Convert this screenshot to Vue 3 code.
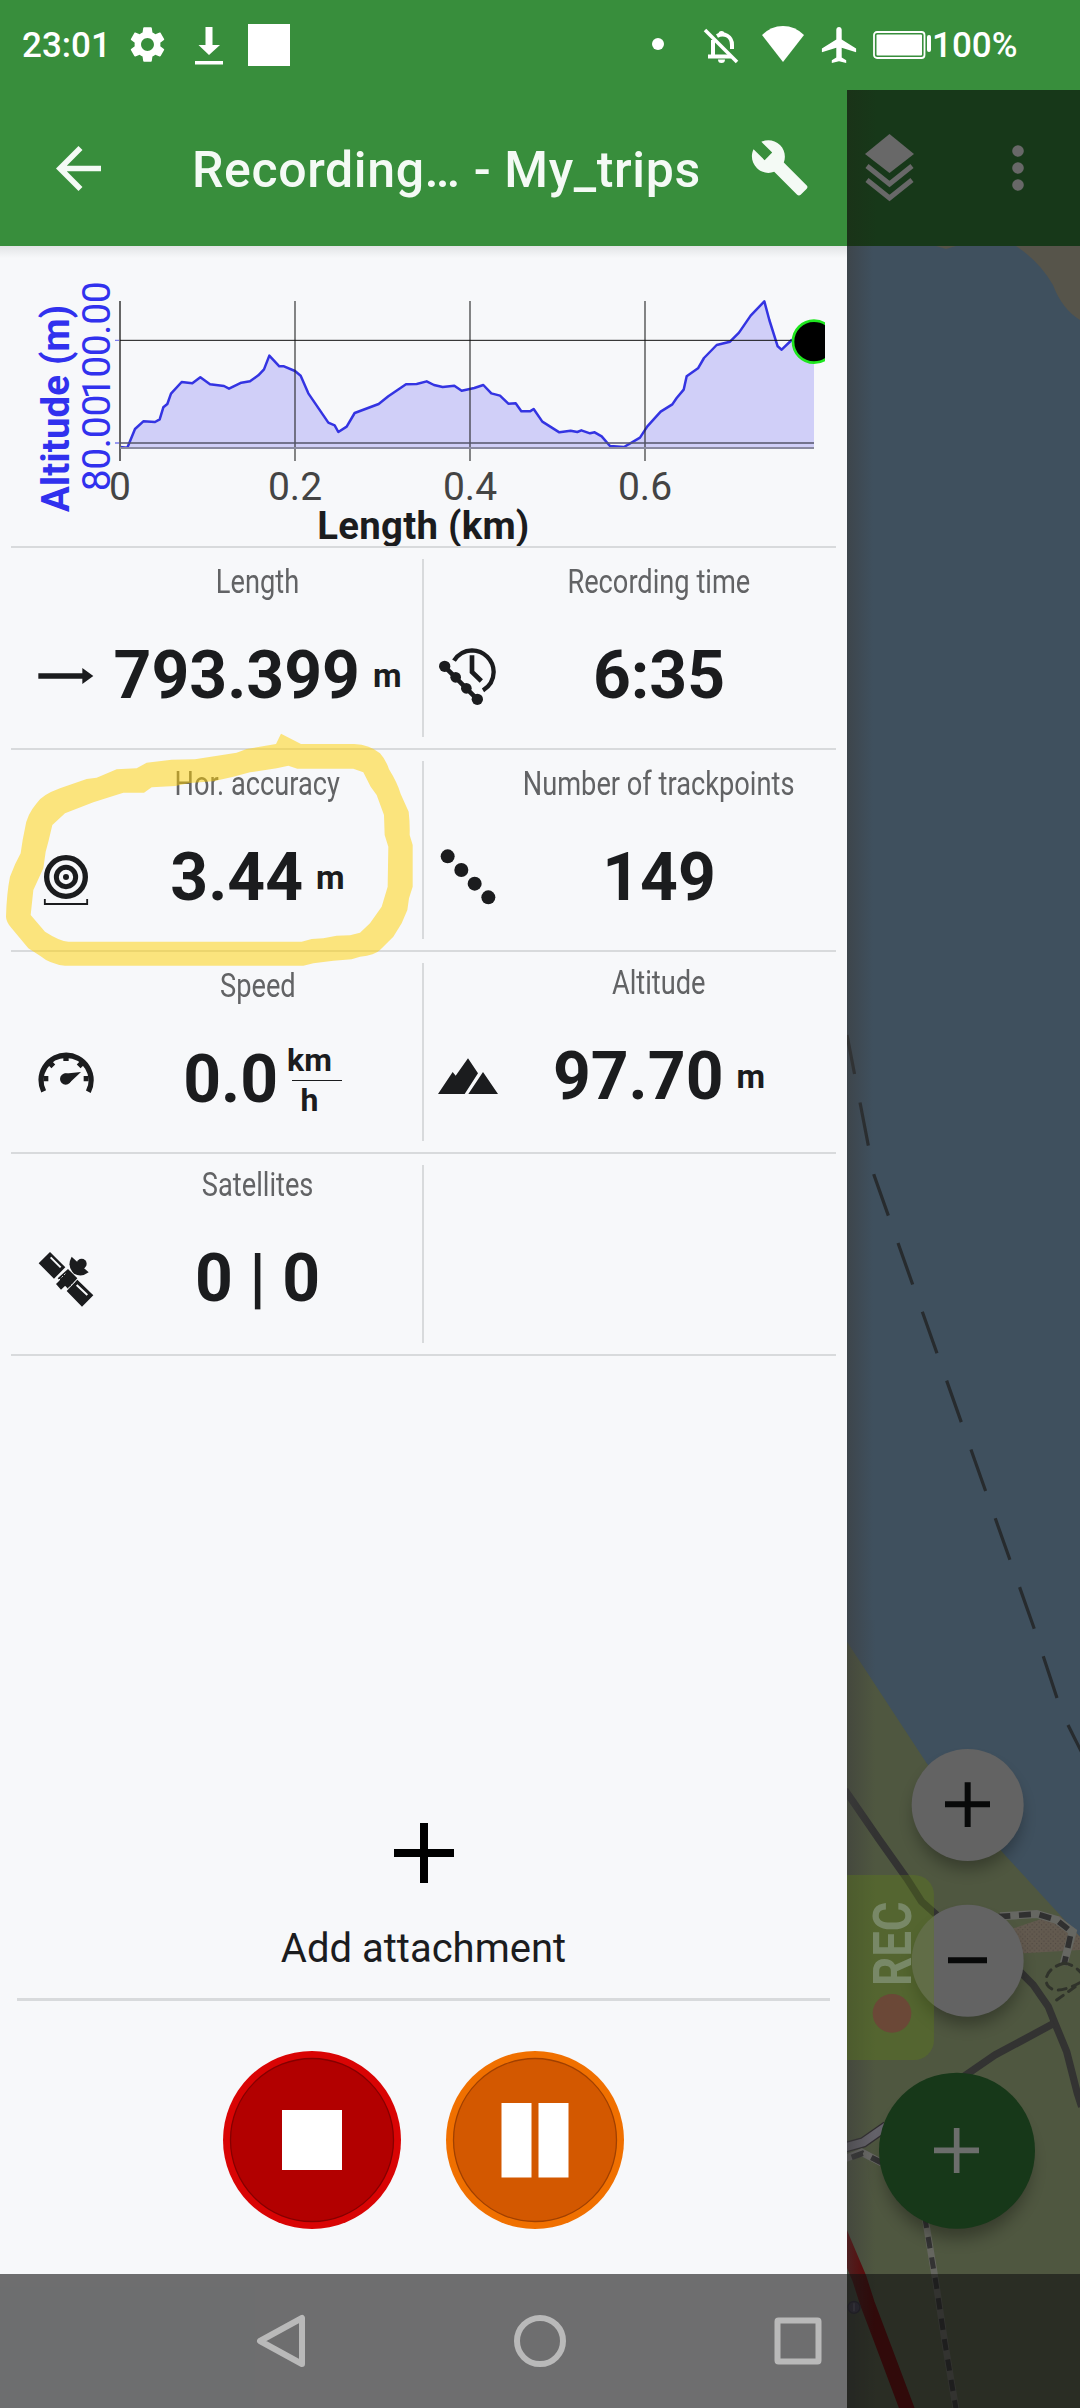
<script setup>
const altitudeLine =
  '360,591 382,593 405,537 430,514 465,516 479,508 490,472 502,462 513,431 545,396 577,400 601,382 630,403 672,408 687,416 724,398 750,394 775,376 792,358 808,317 838,349 852,349 885,363 902,377 925,430 985,518 1004,526 1015,546 1040,530 1064,489 1136,462 1165,439 1218,403 1250,402 1280,394 1302,405 1328,411 1363,407 1385,422 1423,414 1450,405 1474,430 1500,437 1525,461 1547,460 1564,484 1590,484 1601,477 1627,515 1678,547 1712,542 1732,546 1744,541 1770,550 1784,547 1805,559 1830,588 1872,591 1920,563 1942,529 1982,485 2017,463 2030,444 2051,419 2060,379 2094,355 2112,324 2150,285 2190,275 2217,248 2252,197 2293,154 2308,210 2333,289 2345,299 2375,270 2442,270'
const altitudeArea = `${altitudeLine} 2442,594 360,594`
const gridX = [
  { x: 360, label: '0' },
  { x: 885, label: '0.2' },
  { x: 1410, label: '0.4' },
  { x: 1935, label: '0.6' },
]
const rows = [
  [
    { id: 'length', label: 'Length', value: '793.399', unit: 'm' },
    { id: 'time', label: 'Recording time', value: '6:35' },
  ],
  [
    { id: 'accuracy', label: 'Hor. accuracy', value: '3.44', unit: 'm' },
    { id: 'points', label: 'Number of trackpoints', value: '149' },
  ],
  [
    { id: 'speed', label: 'Speed', value: '0.0', fraction: ['km', 'h'] },
    { id: 'altitude', label: 'Altitude', value: '97.70', unit: 'm', raised: true },
  ],
  [
    { id: 'satellites', label: 'Satellites', value: '0 | 0', raised: true },
    { id: 'empty' },
  ],
]
</script>

<template>
  <div class="screen">
    <header class="status">
      <span class="clock">23:01</span>
      <svg class="s-gear" viewBox="0 0 24 24" width="43" height="43" fill="#fff"><path d="M19.14 12.94c.04-.3.06-.61.06-.94 0-.32-.02-.64-.07-.94l2.03-1.58c.18-.14.23-.41.12-.61l-1.92-3.32c-.12-.22-.37-.29-.59-.22l-2.39.96c-.5-.38-1.03-.7-1.62-.94l-.36-2.54c-.04-.24-.24-.41-.48-.41h-3.84c-.24 0-.43.17-.47.41l-.36 2.54c-.59.24-1.13.57-1.62.94l-2.39-.96c-.22-.08-.47 0-.59.22L2.74 8.87c-.12.21-.08.47.12.61l2.03 1.58c-.05.3-.09.63-.09.94s.02.64.07.94l-2.03 1.58c-.18.14-.23.41-.12.61l1.92 3.32c.12.22.37.29.59.22l2.39-.96c.5.38 1.03.7 1.62.94l.36 2.54c.05.24.24.41.48.41h3.84c.24 0 .44-.17.47-.41l.36-2.54c.59-.24 1.13-.56 1.62-.94l2.39.96c.22.08.47 0 .59-.22l1.92-3.32c.12-.22.07-.47-.12-.61l-2.01-1.58zM12 15.6c-1.98 0-3.6-1.62-3.6-3.6s1.62-3.6 3.6-3.6 3.6 1.62 3.6 3.6-1.62 3.6-3.6 3.6z" /></svg>
      <svg class="s-down" viewBox="0 0 28 38" width="28" height="38" fill="#fff"><path d="M10.5 0h7v18H25L14 28 3.500 18h7zM0 34h28v3.500H0z" /></svg>
      <span class="s-square"></span>
      <span class="s-dot"></span>
      <svg class="s-bell" viewBox="0 0 36 36" width="36" height="36" fill="none" stroke="#fff"><path d="M10 12V28M5 28.500H28M14 8C21 4 29 8 29 17V21" stroke-width="4" /><path d="M2 2L34 34" stroke-width="3.500" /><path d="M15.500 6a3 3 0 0 1 6 0zM15 31.500h7a3.500 3.500 0 0 1-7 0z" fill="#fff" stroke="none" /></svg>
      <svg class="s-wifi" viewBox="0 0 42 36" width="42" height="36" fill="#fff"><path d="M0 9Q9 0 21 0T42 9L21 36z" /></svg>
      <svg class="s-plane" viewBox="2 2 20 20" width="36" height="36" fill="#fff"><path d="M21.500 16v-2l-8-5V3.500C13.500 2.670 12.830 2 12 2s-1.500.67-1.500 1.500V9l-8 5v2l8-2.500V19l-2.500 1.500V22l4-1 4 1v-1.500L13.500 19v-5.500z" /></svg>
      <svg class="s-battery" viewBox="0 0 58 28" width="58" height="28" fill="#fff"><rect x="1" y="1" width="50.500" height="26" rx="3" fill="none" stroke="#fff" stroke-width="1.800" /><rect x="3.500" y="3.500" width="45.500" height="21" rx="1" /><rect x="54" y="4" width="4" height="17" rx="2" /></svg>
      <span class="percent">100%</span>
    </header>

    <div class="body">
      <main class="drawer">
        <div class="appbar">
          <svg class="back" viewBox="4 4 16 16" width="45" height="45" fill="#f4faf5"><path d="M20 11H7.830l5.590-5.590L12 4l-8 8 8 8 1.410-1.410L7.830 13H20z" /></svg>
          <h1>Recording… - My_trips</h1>
          <svg class="wrench" viewBox="0.600 0.800 22.600 22.200" width="57" height="57" fill="#f4faf5"><path d="M22.700 19l-9.100-9.100c.9-2.300.4-5-1.500-6.900-2-2-5-2.400-7.400-1.300L9 6 6 9 1.600 4.700C.4 7.100.9 10.100 2.900 12.100c1.900 1.900 4.600 2.400 6.900 1.500l9.100 9.100c.4.4 1 .4 1.400 0l2.300-2.300c.5-.4.5-1.100.1-1.400z" /></svg>
        </div>

        <svg class="chart" viewBox="0 -12 2541 900" width="847" height="300">
          <defs>
            <linearGradient id="fade" x1="0" y1="0" x2="0" y2="1"><stop offset="0" stop-color="#e2e4e6" /><stop offset="1" stop-color="#f7f8fa" /></linearGradient>
            <clipPath id="plot"><rect x="300" y="100" width="2175" height="560" /></clipPath>
          </defs>
          <rect x="0" y="-12" width="2541" height="36" fill="url(#fade)" />
          <polygon :points="altitudeArea" fill="#d0cff8" />
          <path d="M345 271H360M345 579H360" stroke="#7b7bf0" stroke-width="4" />
          <polyline :points="altitudeLine" fill="none" stroke="#3434e2" stroke-width="7.500" stroke-linejoin="round" />
          <path d="M360 153V633" stroke="#666" stroke-width="6" />
          <path d="M885 153V633M1410 153V633M1935 153V633" stroke="#222" stroke-opacity=".65" stroke-width="5" />
          <path d="M360 579H2442" stroke="#55556a" stroke-width="4.500" />
          <path d="M360 594H2442" stroke="#8a8aa0" stroke-width="5.500" />
          <path d="M360 271H2442" stroke="#111" stroke-width="3" />
          <circle cx="2442" cy="275" r="63" fill="#000" stroke="#1fe61f" stroke-width="8" clip-path="url(#plot)" />
          <text v-for="g in gridX" :key="g.x" :x="g.x" y="749" class="tick">{{ g.label }}</text>
          <text x="1270" y="866" class="axis" textLength="636">Length (km)</text>
          <text transform="translate(207 475) rotate(-90)" class="axis blue" textLength="622">Altitude (m)</text>
          <text transform="translate(330 271) rotate(-90)" class="tick blue" textLength="354">100.00</text>
          <text transform="translate(330 579) rotate(-90)" class="tick blue" textLength="290">80.00</text>
        </svg>

        <section class="stats">
          <div v-for="(row, i) in rows" :key="i" class="row">
            <div v-for="(c, j) in row" :key="c.id" class="cell" :class="j ? 'right' : 'left'">
              <div class="icon">
                <svg v-if="c.id === 'length'" viewBox="108 318 180 180"><path d="M115 400H247V384L280 408L247 432V416H115z" /></svg>
                <svg v-else-if="c.id === 'time'" viewBox="54 318 180 180"><g fill="none" stroke="#1b1c1e"><path d="M102 362A66 66 0 0 1 156 331A66 66 0 0 1 221 396A66 66 0 0 1 189 451" stroke-width="13" /><path d="M156 346V396L184 423" stroke-width="14" /><path d="M74 380L172 478" stroke-width="14" /></g><circle cx="74" cy="379" r="17" /><circle cx="107" cy="412" r="16" /><circle cx="139" cy="445" r="16" /><circle cx="172" cy="478" r="17" /></svg>
                <svg v-else-if="c.id === 'accuracy'" viewBox="108 924 180 180"><g fill="none" stroke="#1b1c1e"><circle cx="198" cy="1011" r="58" stroke-width="16" /><circle cx="198" cy="1011" r="29" stroke-width="15" /><path d="M134.500 1077V1092H261.500V1077" stroke-width="5.500" /></g><circle cx="198" cy="1011" r="9" /></svg>
                <svg v-else-if="c.id === 'points'" viewBox="54 924 180 180"><circle cx="83" cy="949" r="21" /><circle cx="124" cy="990" r="21" /><circle cx="164" cy="1031" r="21" /><circle cx="205" cy="1072" r="21" /></svg>
                <svg v-else-if="c.id === 'speed'" viewBox="108 300 180 180"><g fill="none" stroke="#1b1c1e" stroke-width="16"><path d="M131 424A75 75 0 1 1 265 425" /><path d="M130 386H145M266 386H251M198 317V333M150 339L160 349M246 339L236 349" /></g><circle cx="197" cy="387" r="17" /><path d="M192 371L243 366L208 399z" /></svg>
                <svg v-else-if="c.id === 'altitude'" viewBox="54 300 180 180"><path d="M54 432L98 366L107 377L144 325L174 370L134 432zM145 432L189 366L234 432z" /></svg>
                <svg v-else-if="c.id === 'satellites'" viewBox="108 906 180 180"><path d="M150 906L196 952L162 986L116 940zM232 989L280 1036L246 1070L200 1023zM204 957L232 985L204 1016L173 985zM168 1002L186 984L202 1001L183 1019z" /><path d="M215 920L266 967Q245 983 222 971Q199 949 215 920z" /><circle cx="245" cy="941" r="15" /><path d="M152 922L182 952M230 1005L262 1035" stroke="#f7f8fa" stroke-width="6" /><path d="M177 990L196 971M205 1014L224 996" stroke="#f7f8fa" stroke-width="3" stroke-dasharray="5 6" /></svg>
              </div>
              <div v-if="c.label" class="info" :class="{ raised: c.raised }">
                <div class="label">{{ c.label }}</div>
                <div class="value">
                  <span>{{ c.value }}</span>
                  <span v-if="c.unit" class="unit">{{ c.unit }}</span>
                  <span v-if="c.fraction" class="fraction"><span>{{ c.fraction[0] }}</span><i></i><span>{{ c.fraction[1] }}</span></span>
                </div>
              </div>
            </div>
          </div>
        </section>

        <section class="attach">
          <svg width="60" height="60" viewBox="0 0 60 60"><path d="M30 0V60M0 30H60" stroke="#000" stroke-width="8" /></svg>
          <span>Add attachment</span>
        </section>
        <div class="rule"></div>
        <section class="controls">
          <svg width="178" height="178" viewBox="0 0 178 178"><circle cx="89" cy="89" r="89" fill="#d90404" /><circle cx="89" cy="89" r="81.500" fill="#b20000" stroke="#850000" stroke-width="1.300" /><path d="M59 59H119V119H59z" fill="#fff" /></svg>
          <svg width="178" height="178" viewBox="0 0 178 178"><circle cx="89" cy="89" r="89" fill="#f07000" /><circle cx="89" cy="89" r="81.500" fill="#d35800" stroke="#a04000" stroke-width="1.300" /><path d="M55.500 52H85.500V126.500H55.500zM92.500 52H122.500V126.500H92.500z" fill="#fff" /></svg>
        </section>

        <svg class="marker" viewBox="0 570 1290 720" width="430" height="240">
          <path fill="#ffd000" fill-opacity=".5" fill-rule="evenodd" d="M843 581L903 612H1062Q1110 614 1140 640Q1158 660 1167 688Q1192 728 1202 762L1226 815Q1230 850 1229 885L1238 915V1040L1227 1075L1222 1110L1205 1150L1180 1190L1140 1230Q1125 1246 1080 1250L1055 1258L1000 1262L940 1270L910 1277H195Q150 1272 120 1247L85 1225L60 1195L35 1165Q18 1145 18 1130Q20 1060 30 1010Q45 970 62 940L68 900L75 865Q80 825 110 790Q125 765 180 745L260 717L290 713L350 688L410 685L440 668L515 659L585 658L710 638L740 627L828 612zM865 677L892 686H1060L1090 697L1112 740L1130 765L1152 825L1154 885L1165 920L1163 1040L1145 1100L1110 1150L1080 1178L1050 1186L1010 1187L970 1195L935 1197L905 1205H205Q180 1204 135 1175L92 1125L100 1050L130 985L137 935L145 905L157 855L195 820L280 787L370 758H432L455 742L525 738L570 729L640 724L700 710L750 697L830 685z" />
        </svg>
      </main>

      <aside class="side">
        <div class="sidebar">
          <svg class="layers" width="49" height="68" viewBox="0 0 49 68" fill="#686868"><path d="M24.500 0L49 20L24.500 39L0 20z" /><path d="M2 32L24.500 50L47 32" fill="none" stroke="#686868" stroke-width="5" /><path d="M2 46L24.500 64L47 46" fill="none" stroke="#686868" stroke-width="5" /></svg>
          <svg width="12" height="46" viewBox="0 0 12 46" fill="#686868"><circle cx="6" cy="6" r="5.800" /><circle cx="6" cy="23" r="5.800" /><circle cx="6" cy="40" r="5.800" /></svg>
        </div>
        <svg class="map" viewBox="847 246 233 2162" width="233" height="2162">
          <defs>
            <linearGradient id="edge"><stop offset="0" stop-color="#3c3c3c" stop-opacity=".55" /><stop offset="1" stop-color="#3c3c3c" stop-opacity="0" /></linearGradient>
            <filter id="soft" x="-30%" y="-30%" width="160%" height="160%"><feGaussianBlur stdDeviation="24" /></filter>
            <pattern id="sand" width="14" height="14" patternUnits="userSpaceOnUse"><rect width="14" height="14" fill="#635a4f" /><path d="M3 3h3v3H3zM10 10h3v3h-3z" fill="#4d453f" /></pattern>
          </defs>
          <rect x="847" y="246" width="233" height="2162" fill="#3f505e" />
          <path d="M1016 246Q1040 262 1053 285Q1062 309 1080 320V246z" fill="#56544a" />
          <path d="M936 246H956L946 249z" fill="#56544a" />
          <g fill="none" stroke="#272b2e" stroke-width="3.200">
            <path d="M1057 1698L1034 1628L874 1175L847 1035" stroke-dasharray="44 29" />
            <path d="M1068 1725L1084 1757" />
          </g>
          <g transform="translate(830 1620) scale(.33333)">
            <path d="M51 65L290 430L520 700L690 885L750 950V2364H51z" fill="#4f5740" />
            <path d="M550 925L640 895L690 888L750 950V990L580 1000z" fill="url(#sand)" />
            <g fill="none" stroke="#333332" stroke-width="22">
              <path d="M45 510L145 655L230 775L275 845L320 885" />
              <path d="M570 1055L610 1095L655 1160L675 1210L710 1295L742 1420L755 1460" />
              <path d="M672 1210L495 1305L400 1370" />
            </g>
            <path d="M510 889L620 882L680 900L728 935L700 1035" fill="none" stroke="#666762" stroke-width="24" />
            <path d="M505 890L620 882L680 900L724 935L702 1035" fill="none" stroke="#303030" stroke-width="17" stroke-dasharray="36 26" />
            <path d="M702 1030C660 1040 640 1070 652 1095C670 1125 720 1105 755 1085M680 1140L750 1090M702 1030Q730 1032 755 1060" fill="none" stroke="#30332b" stroke-width="9" stroke-dasharray="24 20" stroke-linecap="round" />
            <path d="M45 1582L100 1567L170 1518" fill="none" stroke="#302d30" stroke-width="32" /><path d="M45 1582L100 1567L170 1518" fill="none" stroke="#65636b" stroke-width="24" />
            <path d="M45 1616L95 1597L155 1628" fill="none" stroke="#6b6b68" stroke-width="22" /><path d="M65 1612L98 1600L155 1628" fill="none" stroke="#333" stroke-width="17" stroke-dasharray="36 28" />
            <path d="M284 1785L318 1990L345 2170L365 2290L382 2390" fill="none" stroke="#65665f" stroke-width="20" /><path d="M284 1790L318 1990L345 2170L365 2290L382 2390" fill="none" stroke="#333" stroke-width="15" stroke-dasharray="34 28" />
            <path d="M10 1790L88 1975L112 2050L165 2190L240 2390" fill="none" stroke="#600000" stroke-width="44" />
            <circle cx="72" cy="2062" r="18" fill="#4c4664" stroke="#302c44" stroke-width="4" /><path d="M72 2050V2074" stroke="#8985a0" stroke-width="4" />
            <g filter="url(#soft)" opacity=".3" fill="#000"><circle cx="413" cy="588" r="160" /><circle cx="413" cy="1056" r="160" /><circle cx="381" cy="1635" r="222" /></g>
            <rect x="51" y="0" width="85" height="2364" fill="url(#edge)" />
            <circle cx="413" cy="555" r="168" fill="#636363" /><path d="M413 487V621M345 553H480" stroke="#080909" stroke-width="18" />
            <circle cx="413" cy="1022" r="168" fill="#636363" /><path d="M354 1021H471" stroke="#080909" stroke-width="18" />
            <path d="M51 765H252A60 60 0 0 1 312 825V1260A60 60 0 0 1 252 1320H51z" fill="#5e8012" fill-opacity=".34" />
            <text transform="translate(243 1098) rotate(-90)" class="rec" textLength="254" lengthAdjust="spacingAndGlyphs">REC</text>
            <circle cx="186" cy="1180" r="58" fill="#6b4837" />
            <circle cx="381" cy="1592" r="234" fill="#173819" /><path d="M380 1524V1659M312 1591H447" stroke="#6c6e6c" stroke-width="17" />
          </g>
          <rect x="847" y="246" width="26" height="1374" fill="url(#edge)" />
        </svg>
      </aside>
    </div>

    <nav class="nav">
      <svg viewBox="0 0 52 56" width="52" height="56"><path d="M46 5V51L4 28z" /></svg>
      <svg viewBox="0 0 56 56" width="56" height="56"><circle cx="28" cy="28" r="23" /></svg>
      <svg viewBox="0 0 50 56" width="50" height="56"><rect x="4.500" y="7.500" width="41" height="41" rx="1" /></svg>
    </nav>
  </div>
</template>

<style>
body { margin: 0; }
</style>

<style scoped>
.screen { position: relative; width: 1080px; height: 2408px; display: flex; flex-direction: column; overflow: hidden; font-family: Roboto, "Liberation Sans", sans-serif; background: #f7f8fa; color: #1b1c1e; }
svg { display: block; flex: none; }
.status { height: 90px; flex: none; display: flex; align-items: flex-start; background: #388e3c; color: #fff; box-sizing: border-box; padding-left: 22px; }
.clock, .percent { font-size: 35px; line-height: 42px; margin-top: 25px; font-weight: 500; white-space: nowrap; flex: none; }
.clock { width: 104px; }
.s-gear { margin-top: 23px; }
.s-down { margin: 27px 0 0 26px; }
.s-square { width: 42px; height: 42px; background: #fff; margin: 24px 0 0 25px; }
.s-dot { width: 12px; height: 12px; border-radius: 50%; background: #fff; margin: 38px 0 0 362px; }
.s-bell { margin: 28px 0 0 39px; }
.s-wifi { margin: 26px 0 0 23px; }
.s-plane { margin: 27px 0 0 17px; }
.s-battery { margin: 31px 0 0 16px; }
.percent { margin-left: 1px; }

.body { flex: 1; display: flex; }
.drawer { position: relative; width: 847px; flex: none; display: flex; flex-direction: column; background: #f7f8fa; }
.appbar { height: 156px; flex: none; display: flex; align-items: center; background: #388e3c; padding-left: 56px; }
h1 { margin: 3px 0 0 91px; width: 559px; font-size: 50px; line-height: 60px; font-weight: 500; color: #f4faf5; white-space: nowrap; letter-spacing: .62px; }
.wrench { margin-bottom: 2px; }
.tick { font-size: 117px; fill: #444; text-anchor: middle; }
.axis { font-size: 115px; font-weight: 700; fill: #1b1c1e; text-anchor: middle; }
.blue { fill: #3131ee; }

.stats { margin: 0 11px; border-top: 2px solid #d8dadc; }
.row { display: flex; height: 200px; border-bottom: 2px solid #d8dadc; }
.cell { display: flex; box-sizing: border-box; }
.left { width: 413px; padding: 0 19px 0 11px; background: linear-gradient(#d8dadc, #d8dadc) right 11px / 2px 178px no-repeat; }
.right { width: 412px; padding-right: 30px; }
.icon { width: 88px; flex: none; padding-top: 98px; box-sizing: border-box; }
.icon svg { width: 60px; height: 60px; margin: 0 auto; fill: #1b1c1e; }
.info { flex: 1; min-width: 0; padding-top: 14px; display: flex; flex-direction: column; align-items: center; }
.info.raised { padding-top: 11px; }
.label { font-size: 33px; line-height: 39px; color: #626365; white-space: nowrap; transform: scaleX(.825); }
.value { display: flex; justify-content: center; align-items: baseline; margin-top: 36px; font-size: 66px; line-height: 78px; font-weight: 700; white-space: nowrap; }
.unit { font-size: 33px; line-height: 39px; margin-left: 13px; transform: translateY(-11px); }
.fraction { display: flex; flex-direction: column; align-items: center; font-size: 32px; line-height: 39px; margin-left: 9px; transform: translateY(-31px); }
.fraction i { width: 50px; height: 1px; background: #1b1c1e; margin: 0 -13px 0 3px; }

.attach { margin-top: auto; display: flex; flex-direction: column; align-items: center; }
.attach span { margin-top: 42px; font-size: 40px; line-height: 48px; }
.rule { height: 3px; margin: 25px 17px 0; background: #d8dadc; }
.controls { display: flex; justify-content: center; gap: 45px; margin: 50px 0 179px; }
.marker { position: absolute; left: 0; top: 640px; transform: translateY(0); }

.side { width: 233px; display: flex; flex-direction: column; }
.sidebar { height: 156px; display: flex; align-items: center; background: linear-gradient(90deg, #1a3318, #173819 30px); }
.layers { margin: 0 98px 0 18px; }
.rec { font-size: 160px; font-weight: 700; fill: #788867; }

.nav { position: absolute; left: 0; bottom: 0; width: 1080px; height: 134px; display: flex; align-items: center; background: rgba(16, 16, 16, .596); box-sizing: border-box; padding-left: 256px; }
.nav svg { fill: none; stroke: #b9b9b9; stroke-width: 6; stroke-linejoin: round; }
.nav svg:nth-child(2) { margin: 0 205px 0 204px; }
</style>
